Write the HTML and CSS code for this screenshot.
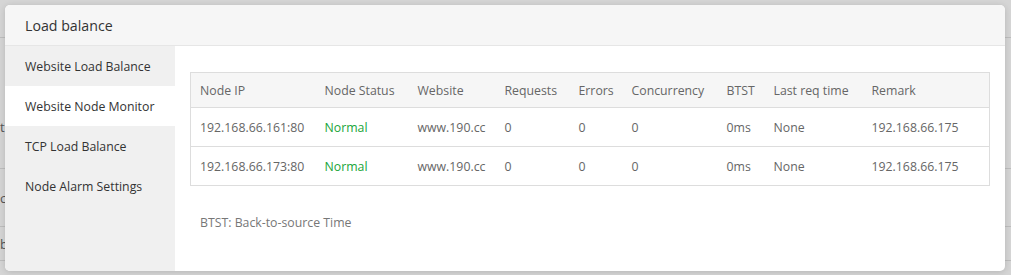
FILE: index.html
```
<!DOCTYPE html>
<html lang="en">
<head>
  <meta charset="UTF-8" />
  <title>Load balance</title>
  <link rel="stylesheet" href="styles.css">
</head>
<body>
  <!-- page behind the modal -->
  <div class="page">
    <div class="page-row r1"></div>
    <div class="page-row r2"><span>t</span></div>
    <div class="page-row r3"><span>c</span></div>
    <div class="page-row r4"><span>b</span></div>
  </div>

  <div class="modal">
    <div class="modal-title">Load balance</div>
    <div class="modal-body">
      <ul class="side-menu">
        <li>Website Load Balance</li>
        <li class="active">Website Node Monitor</li>
        <li>TCP Load Balance</li>
        <li>Node Alarm Settings</li>
      </ul>

      <div class="content">
        <table class="node-table">
          <colgroup>
            <col style="width:125px">
            <col style="width:93px">
            <col style="width:87px">
            <col style="width:74px">
            <col style="width:53px">
            <col style="width:95px">
            <col style="width:47px">
            <col style="width:98px">
            <col>
          </colgroup>
          <thead>
            <tr>
              <th>Node IP</th>
              <th>Node Status</th>
              <th>Website</th>
              <th>Requests</th>
              <th>Errors</th>
              <th>Concurrency</th>
              <th>BTST</th>
              <th>Last req time</th>
              <th>Remark</th>
            </tr>
          </thead>
          <tbody>
            <tr>
              <td>192.168.66.161:80</td>
              <td class="ok">Normal</td>
              <td>www.190.cc</td>
              <td>0</td>
              <td>0</td>
              <td>0</td>
              <td>0ms</td>
              <td>None</td>
              <td>192.168.66.175</td>
            </tr>
            <tr>
              <td>192.168.66.173:80</td>
              <td class="ok">Normal</td>
              <td>www.190.cc</td>
              <td>0</td>
              <td>0</td>
              <td>0</td>
              <td>0ms</td>
              <td>None</td>
              <td>192.168.66.175</td>
            </tr>
          </tbody>
        </table>

        <p class="note">BTST: Back-to-source Time</p>
      </div>
    </div>
  </div>
</body>
</html>
```

FILE: styles.css
```
* {
  margin: 0;
  padding: 0;
  box-sizing: border-box;
}

body {
  font-family: 'Open Sans', 'Noto Sans', sans-serif;
  font-size: 12.3px;
  color: #333;
  background: #d5d5d5;
  width: 1011px;
  height: 275px;
  overflow: hidden;
  position: relative;
}

.page {
  display: flex;
  flex-direction: column;
}

.page-row {
  border-bottom: 1px solid #bdbdbd;
  color: #555;
  font-size: 13px;
  display: flex;
  align-items: center;
  overflow: hidden;
}

.r1 { height: 38px; }
.r2 { height: 131px; align-items: flex-end; padding-bottom: 32px; }
.r3 { height: 58px; }
.r4 { height: 34px; }

/* modal */
.modal {
  position: absolute;
  top: 5px;
  left: 5px;
  width: 1000px;
  height: 266px;
  background: #fff;
  border-radius: 5px;
  overflow: hidden;
  box-shadow: 0 1px 6px rgba(0, 0, 0, 0.15);
  display: flex;
  flex-direction: column;
}

.modal-title {
  height: 41px;
  flex-shrink: 0;
  background: #f6f6f6;
  border-bottom: 1px solid #e6e6e6;
  padding-left: 20px;
  font-size: 14.2px;
  line-height: 42px;
  color: #333;
}

.modal-body {
  flex: 1;
  display: flex;
}

.side-menu {
  list-style: none;
  width: 170px;
  flex-shrink: 0;
  background: #f0f0f0;
}

.side-menu li {
  height: 40px;
  line-height: 42px;
  padding-left: 20px;
  color: #333;
  font-size: 12.3px;
}

.side-menu li.active {
  background: #fff;
}

.content {
  flex: 1;
  padding: 26px 15px 0 15px;
}

.node-table {
  width: 800px;
  border-collapse: collapse;
  table-layout: fixed;
  border: 1px solid #ddd;
}

.node-table th,
.node-table td {
  text-align: left;
  font-weight: normal;
  padding: 0 0 0 9px;
  white-space: nowrap;
  color: #666;
  font-size: 12.3px;
}

.node-table th {
  background: #f6f6f6;
  height: 35px;
}

.node-table td {
  height: 39px;
  border-top: 1px solid #ddd;
}

.node-table td.ok {
  color: #20a53a;
}

.note {
  margin-top: 28px;
  padding-left: 10px;
  font-size: 12.3px;
  color: #777;
}
```
